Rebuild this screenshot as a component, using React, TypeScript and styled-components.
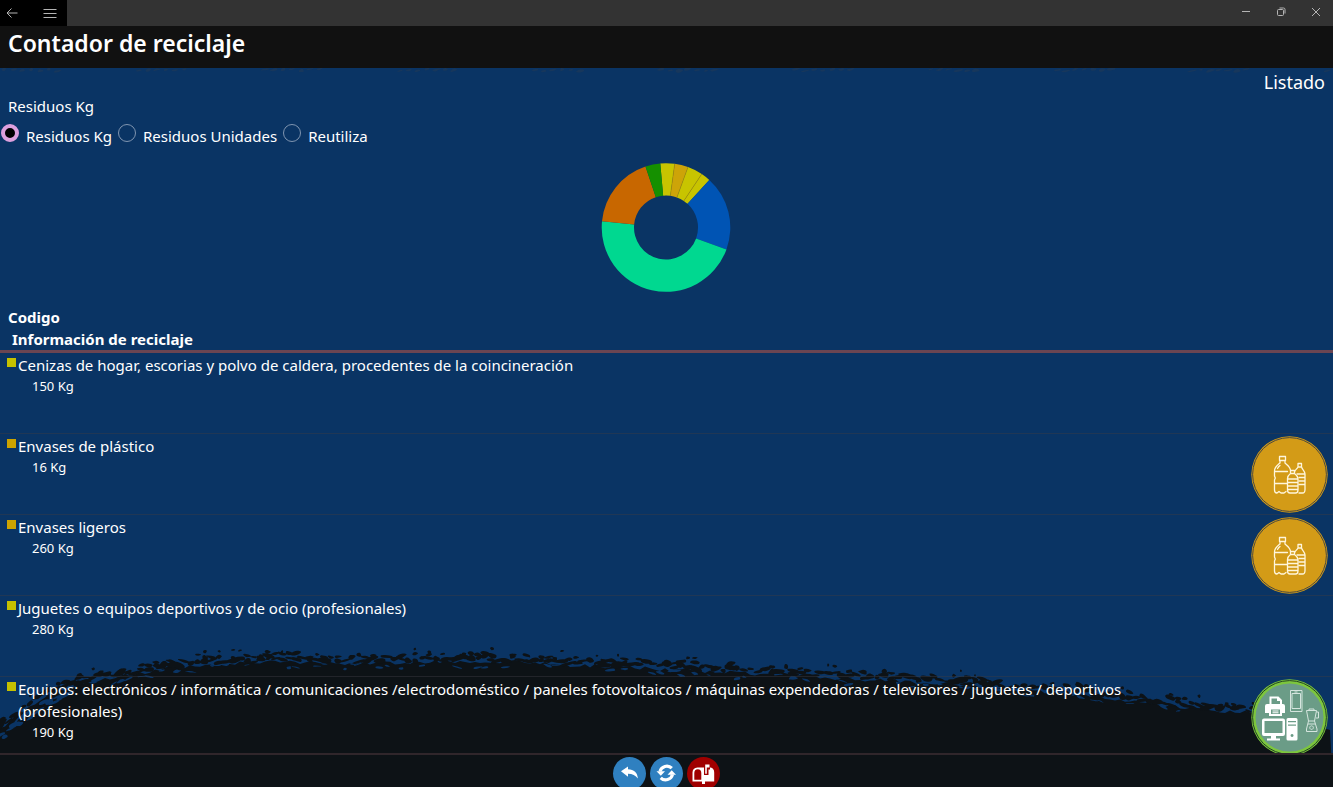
import React from 'react';
import styled, { createGlobalStyle } from 'styled-components';

const GlobalStyle = createGlobalStyle`
  * { box-sizing: border-box; }
  html, body, #root { height: 100%; }
  body {
    margin: 0;
    background: #0d1216;
    color: #ffffff;
    font-family: "Noto Sans", "Open Sans", sans-serif;
    font-size: 15px;
    line-height: 22px;
    overflow: hidden;
  }
`;

const Page = styled.div`
  height: 100%;
  display: flex;
  flex-direction: column;
`;

const TitleBar = styled.div`
  flex: none;
  height: 26px;
  display: flex;
  justify-content: space-between;
  background: #333333;
`;

const NavButtons = styled.nav`
  display: flex;
  gap: 18px;
  padding: 0 7px 0 2px;
  background: #000000;
`;

const WindowButtons = styled.div`
  display: flex;
  gap: 17px;
  padding-right: 8px;
`;

const BarButton = styled.button`
  display: grid;
  place-items: center;
  width: 18px;
  height: 24px;
  padding: 0;
  border: 0;
  background: none;
  color: #b4b4b4;
`;

const NavButton = styled(BarButton)`
  width: 20px;
  height: 26px;
`;

const Header = styled.header`
  flex: none;
  height: 42px;
  padding: 1px 8px;
  background: #111111;
`;

const Heading = styled.h1`
  margin: 0;
  font-size: 23px;
  line-height: 32px;
  font-weight: 600;
`;

const Content = styled.main`
  position: relative;
  flex: 1;
  min-height: 0;
  display: flex;
  flex-direction: column;
  background: #0a3464;
`;

const Backdrop = styled.svg`
  position: absolute;
  left: 0;
  bottom: 0;
  width: 100%;
  height: 113px;
`;

const TopGrain = styled.svg`
  position: absolute;
  left: 0;
  top: 0;
  width: 100%;
  height: 6px;
`;

const Body = styled.div`
  position: relative;
  flex: 1;
  min-height: 0;
  overflow: hidden;
`;

const ListLink = styled.a`
  display: block;
  padding: 0 8px;
  color: #ffffff;
  font-size: 18px;
  line-height: 28px;
  text-align: right;
  text-decoration: none;
`;

const Filter = styled.fieldset`
  margin: 0;
  padding: 0;
  border: 0;
`;

const Legend = styled.legend`
  padding: 0 8px;
  line-height: 20px;
`;

const Options = styled.div`
  display: flex;
  gap: 6px;
  padding: 8px 1px 0;
`;

const Option = styled.label`
  display: flex;
  gap: 7px;
  line-height: 24px;
`;

const Radio = styled.input`
  appearance: none;
  width: 18px;
  height: 18px;
  margin: 0;
  border: 1px solid #8095b0;
  border-radius: 50%;
  &:checked {
    border: 4px solid #dda0dd;
    background: #000000;
  }
`;

const ChartArea = styled.div`
  display: flex;
  justify-content: center;
  padding: 14px 0 13px;
`;

const ListHeader = styled.div`
  padding: 0 8px;
  border-bottom: 3px solid #6b4552;
  font-weight: 700;
`;

const ListHeaderLine = styled.div<{ $indent?: boolean }>`
  padding-left: ${(p) => (p.$indent ? '4px' : '0')};
`;

const List = styled.ul`
  margin: 0;
  padding: 0;
  list-style: none;
`;

const Row = styled.li`
  display: flex;
  min-height: 81px;
  padding: 1px 5px 1px 7px;
  border-bottom: 1px solid rgba(60, 60, 66, 0.45);
`;

const Swatch = styled.span<{ $color: string }>`
  flex: none;
  width: 9px;
  height: 9px;
  margin: 4px 2px 0 0;
  background: ${(p) => p.$color};
`;

const RowText = styled.div`
  flex: 1;
  padding-right: 32px;
`;

const Amount = styled.div`
  padding-left: 14px;
  font-size: 13px;
  line-height: 20px;
`;

const Badge = styled.svg`
  flex: none;
  width: 77px;
  height: 77px;
  margin-top: 1px;
`;

const Footer = styled.footer`
  position: relative;
  flex: none;
  height: 34px;
  display: flex;
  justify-content: center;
  gap: 4px;
  padding-top: 2px;
  border-top: 2px solid #30262b;
  background: #0d1216;
  overflow: hidden;
`;

const RoundButton = styled.button<{ $color: string }>`
  flex: none;
  width: 33px;
  height: 33px;
  padding: 0;
  border: 0;
  border-radius: 50%;
  background: ${(p) => p.$color};
  color: #ffffff;
  svg { display: block; }
`;

const slices = [
  { from: -5.1, to: 7.8, color: '#c8c400' },
  { from: 7.8, to: 20, color: '#cda408' },
  { from: 20, to: 33.8, color: '#c8c400' },
  { from: 33.8, to: 42.3, color: '#c8c400' },
  { from: 42.3, to: 109.9, color: '#0054b4' },
  { from: 109.9, to: 275.6, color: '#00d890' },
  { from: 275.6, to: 341.4, color: '#c86700' },
  { from: 341.4, to: 354.9, color: '#159000' },
];

function polar(r: number, deg: number) {
  const a = (deg * Math.PI) / 180;
  return `${(65 + r * Math.sin(a)).toFixed(2)} ${(65.5 - r * Math.cos(a)).toFixed(2)}`;
}

function Donut() {
  return (
    <svg width="131" height="131" viewBox="0 0 131 131" role="img" aria-label="Residuos Kg">
      {slices.map(({ from, to, color }) => (
        <path
          key={from}
          fill={color}
          d={`M${polar(64.3, from)}A64.3 64.3 0 0 1 ${polar(64.3, to)}L${polar(32, to)}A32 32 0 0 0 ${polar(32, from)}Z`}
        />
      ))}
      {[7.8, 20, 33.8].map((a) => (
        <path key={a} d={`M${polar(32, a)}L${polar(64, a)}`} stroke="#a38a08" strokeWidth="0.6" />
      ))}
    </svg>
  );
}

const ridge = [
  [0, 730], [12, 720], [28, 708], [50, 694], [90, 682], [130, 675], [170, 668], [220, 664], [280, 662],
  [350, 663], [450, 662], [520, 662], [570, 665], [620, 667], [700, 671], [760, 674], [820, 678], [880, 680],
  [940, 683], [1020, 690], [1080, 694], [1130, 701], [1170, 706], [1220, 711], [1262, 713], [1310, 721], [1333, 730],
];

function ridgeY(x: number) {
  const i = Math.max(1, ridge.findIndex((p) => p[0] >= x));
  const [x0, y0] = ridge[i - 1];
  const [x1, y1] = ridge[i];
  return y0 + ((y1 - y0) * (x - x0)) / (x1 - x0) - 640;
}

function randomFrom(seed: number) {
  let s = seed;
  return () => {
    s = (s * 16807) % 2147483647;
    return s / 2147483647;
  };
}

function blob(rnd: () => number, cx: number, cy: number, w: number, h: number, angle: number) {
  const n = 8;
  const pts = Array.from({ length: n }, (_, i) => {
    const a = (i / n) * Math.PI * 2;
    const k = 0.65 + rnd() * 0.7;
    const px = Math.cos(a) * w * k;
    const py = Math.sin(a) * h * k;
    return [cx + px * Math.cos(angle) - py * Math.sin(angle), cy + px * Math.sin(angle) + py * Math.cos(angle)];
  });
  const mid = (i: number) => {
    const p = pts[i % n];
    const q = pts[(i + 1) % n];
    return `${((p[0] + q[0]) / 2).toFixed(1)} ${((p[1] + q[1]) / 2).toFixed(1)}`;
  };
  let d = `M${mid(n - 1)}`;
  pts.forEach((p, i) => {
    d += `Q${p[0].toFixed(1)} ${p[1].toFixed(1)} ${mid(i)}`;
  });
  return `${d}Z`;
}

function brushStroke() {
  const rnd = randomFrom(4217);
  let edge = 'M0 147';
  for (let x = 0; x <= 1333; x += 5) {
    edge += `L${x} ${(ridgeY(x) + (rnd() - 0.5) * 4).toFixed(1)}`;
  }
  edge += 'L1333 147Z';
  let dark = '';
  let blue = '';
  for (let x = 2; x < 1325; x += 7) {
    const slope = Math.atan((ridgeY(x + 8) - ridgeY(x)) / 8);
    const tilt = () => slope + (rnd() - 0.5) * 0.7;
    dark += blob(rnd, x, ridgeY(x) - 1 - rnd() * 5, 3 + rnd() * 5, 1.2 + rnd() * 2, tilt());
    if (rnd() > 0.45) dark += blob(rnd, x, ridgeY(x) - 5 - rnd() * 4, 2 + rnd() * 4, 1.2 + rnd() * 1.4, tilt());
    if (rnd() > 0.85) dark += blob(rnd, x, ridgeY(x) - 10 - rnd() * 4, 1 + rnd() * 2, 0.8 + rnd(), tilt());
    if (rnd() > 0.6) blue += blob(rnd, x, ridgeY(x) + 1 + rnd() * 5, 2 + rnd() * 4, 0.5 + rnd() * 1.2, tilt());
  }
  for (let x = 0; x < 75; x += 5) {
    blue += blob(rnd, x, ridgeY(x) + 4 + rnd() * 8, 3 + rnd() * 4, 1 + rnd() * 1.8, -0.5);
  }
  return { edge, dark, blue };
}

const stroke = brushStroke();

function topGrain() {
  const rnd = randomFrom(913);
  let d = '';
  for (let x = 4; x < 1333; x += 9) {
    if (x % 132 < 60) d += blob(rnd, x, 1 + rnd() * 2, 2 + rnd() * 3, 0.8 + rnd(), -0.2);
  }
  return d;
}

const grain = topGrain();

function BottlesBadge() {
  return (
    <Badge viewBox="0 0 77 77" role="img" aria-label="Envases">
      <circle cx="38.5" cy="38.5" r="38.2" fill="#d39b17" />
      <circle cx="38.5" cy="38.5" r="36.9" fill="none" stroke="#3d4142" strokeWidth="0.9" />
      <g fill="none" stroke="#fff6dc" strokeWidth="1.3" strokeLinecap="round" strokeLinejoin="round">
        <path d="M28.5 20.5h6v4h-6zM29 24.5v2.5c-3 2.5-5.5 4-5.5 8v5l.8 2-.8 2v10c0 2 1 3 2.5 3l2-1.5 2 1.5h3l2-1.5M34 24.5v2.500c3 2.500 5.500 4 5.500 7.500M23.500 35.500h13M23.500 47.500h13M26.500 32.500q1-2 2.500-3" />
        <path d="M39.5 34.5h4v3h-4zM39.5 37.5c-2 1.5-3 2.5-3 5v11.5q0 3 2.5 3h5.500q2.500 0 2.500-3v-11.500c0-2.500-1.500-3.500-3.500-5M36.500 43h10M37 46.500h9.500M37 50h9.500M37 53.500h9.500" />
        <path d="M47 27.5h3.500v3.500h-3.500zM47 31c-1 2-3 3-3 4M50.500 31c1 3 3.500 4 3.500 7v15.500q0 3.500-2.500 3.500h-3.500M46 38h7.500M48 41.500h5.500M48 45h5.500M48 48.500h5.500" />
      </g>
    </Badge>
  );
}

function DevicesBadge() {
  return (
    <Badge viewBox="0 0 77 77" role="img" aria-label="Equipos">
      <circle cx="38.5" cy="38.5" r="38.2" fill="#7cc63d" />
      <circle cx="38.5" cy="38.5" r="36.9" fill="none" stroke="#173420" strokeWidth="0.9" />
      <circle cx="38.5" cy="38.5" r="34" fill="#6b9c87" />
      <g fill="#ffffff">
        <path fillRule="evenodd" d="M18.500 17.500h9l3.500 3.500v4h1q2 0 2 2v7h-4v-4.500h-12v4.500h-4v-7q0-2 2-2h2.500zM20.500 19.500v5.500h8.500v-3h-3v-2.500z" />
        <path fillRule="evenodd" d="M18 28.500h13v8.500h-13zM20 30.500v4.500h9v-4.500zM21.500 31.500h6v1h-6zM21.500 33.200h6v1h-6z" />
        <path fillRule="evenodd" d="M13 39.500h19q2 0 2 2v13.500q0 2-2 2h-7v2.500h4v2h-13v-2h4v-2.500h-7q-2 0-2-2v-13.500q0-2 2-2zM13.500 42v12h18v-12z" />
        <path fillRule="evenodd" d="M37 39h8q1.500 0 1.500 1.500v19.500q0 1.500-1.500 1.500h-8q-1.500 0-1.500-1.500v-19.500q0-1.500 1.500-1.500zM37 42v1.200h8v-1.200zM37 45.500v1.200h8v-1.200zM41 55a1.500 1.500 0 1 0 .1 0z" />
      </g>
      <g fill="none" stroke="#d5e5de" strokeWidth="1">
        <path d="M39.500 11.500h11.500v21h-11.500zM41 14.500h8.500v15h-8.500zM43.500 13h3" />
        <path d="M55.500 31.500h10l-2 10.500h-6zM58 31.500v-1.500h5v1.500M65.500 33h2v6h-2.500M57.500 42l-2 8v2.500h10.500v-2.500l-2.500-8M57 45h7M60.500 46.800a1.800 1.800 0 1 0 .1 0" />
      </g>
    </Badge>
  );
}

type Item = { title: string; amount: string; color: string; icon?: React.ReactNode };

const items: Item[] = [
  {
    title: 'Cenizas de hogar, escorias y polvo de caldera, procedentes de la coincineración',
    amount: '150 Kg',
    color: '#c5c100',
  },
  { title: 'Envases de plástico', amount: '16 Kg', color: '#cca300', icon: <BottlesBadge /> },
  { title: 'Envases ligeros', amount: '260 Kg', color: '#cca300', icon: <BottlesBadge /> },
  { title: 'Juguetes o equipos deportivos y de ocio (profesionales)', amount: '280 Kg', color: '#c5c100' },
  {
    title:
      'Equipos: electrónicos / informática / comunicaciones /electrodoméstico / paneles fotovoltaicos / máquinas expendedoras / televisores / juguetes / deportivos (profesionales)',
    amount: '190 Kg',
    color: '#c5c100',
    icon: <DevicesBadge />,
  },
];

const options = ['Residuos Kg', 'Residuos Unidades', 'Reutiliza'];

export default function App() {
  return (
    <Page>
      <GlobalStyle />
      <TitleBar>
        <NavButtons>
          <NavButton aria-label="Atrás">
            <svg width="12" height="12" viewBox="0 0 12 12" fill="none" stroke="currentColor">
              <path d="M11.500 6H1M5.500 1.500L1 6l4.500 4.500" />
            </svg>
          </NavButton>
          <NavButton aria-label="Menú">
            <svg width="14" height="12" viewBox="0 0 14 12" stroke="currentColor">
              <path d="M0.500 2.500h13M0.500 6.500h13M0.500 10.500h13" />
            </svg>
          </NavButton>
        </NavButtons>
        <WindowButtons>
          <BarButton aria-label="Minimizar">
            <svg width="10" height="10" viewBox="0 0 10 10" stroke="currentColor">
              <path d="M1 4.500h8" />
            </svg>
          </BarButton>
          <BarButton aria-label="Restaurar">
            <svg width="10" height="10" viewBox="0 0 10 10" fill="none" stroke="currentColor">
              <rect x="1.500" y="2.500" width="6" height="6" rx="1" />
              <path d="M3.500 1h4q1.500 0 1.500 1.500v4" />
            </svg>
          </BarButton>
          <BarButton aria-label="Cerrar">
            <svg width="10" height="10" viewBox="0 0 10 10" stroke="currentColor">
              <path d="M1 1l8 8M9 1L1 9" />
            </svg>
          </BarButton>
        </WindowButtons>
      </TitleBar>
      <Header>
        <Heading>Contador de reciclaje</Heading>
      </Header>
      <Content>
        <TopGrain viewBox="0 0 1333 6" preserveAspectRatio="none" aria-hidden="true">
          <path d={grain} fill="#17375c" />
        </TopGrain>
        <Backdrop viewBox="0 0 1333 113" preserveAspectRatio="none" aria-hidden="true">
          <path d={stroke.edge} fill="#0d1216" />
          <path d={stroke.dark} fill="#0d1216" />
          <path d={stroke.blue} fill="#0a3464" />
        </Backdrop>
        <Body>
          <ListLink href="#listado">Listado</ListLink>
          <Filter>
            <Legend>Residuos Kg</Legend>
            <Options>
              {options.map((name, i) => (
                <Option key={name}>
                  <Radio type="radio" name="tipo" defaultChecked={i === 0} />
                  {name}
                </Option>
              ))}
            </Options>
          </Filter>
          <ChartArea>
            <Donut />
          </ChartArea>
          <ListHeader>
            <ListHeaderLine>Codigo</ListHeaderLine>
            <ListHeaderLine $indent>Información de reciclaje</ListHeaderLine>
          </ListHeader>
          <List>
            {items.map((item) => (
              <Row key={item.title}>
                <Swatch $color={item.color} />
                <RowText>
                  <div>{item.title}</div>
                  <Amount>{item.amount}</Amount>
                </RowText>
                {item.icon}
              </Row>
            ))}
          </List>
        </Body>
      </Content>
      <Footer>
        <RoundButton $color="#2f80c0" aria-label="Volver">
          <svg width="33" height="33" viewBox="0 0 33 33" fill="currentColor">
            <path d="M8 14.2L15 9.500v2.800c6 .2 9.500 3.200 9.900 9.300-2.400-3.300-5.400-4.800-9.900-4.800v2.900z" />
          </svg>
        </RoundButton>
        <RoundButton $color="#2f80c0" aria-label="Actualizar">
          <svg width="33" height="33" viewBox="0 0 33 33">
            <path
              d="M10 14.500A7 6.800 0 0 1 21.800 11.200M22.500 17.500A7 6.800 0 0 1 10.700 20.800"
              fill="none"
              stroke="currentColor"
              strokeWidth="3.2"
            />
            <path d="M6.500 14.200h8.500l-4.200 4.600zM26 17.800h-8.500l4.200-4.600z" fill="currentColor" />
          </svg>
        </RoundButton>
        <RoundButton $color="#a00000" aria-label="Buzón">
          <svg width="33" height="33" viewBox="0 0 33 33" fill="currentColor">
            <path fillRule="evenodd" d="M10.500 10.500h6.500v7.500h4.500v-5.500h1.500v-2h.5q3.700.8 3.700 5v9h-9.200v2.500h-3v-2.500h-9.500v-9q0-4.500 5-5zM10.800 12.300q-3.500.2-3.500 3.700v6.700h7v-6.700q0-3.500-3.500-3.700z" />
            <path d="M18.200 7.500h4.300v3h-2.700v6.300h-1.600z" />
          </svg>
        </RoundButton>
      </Footer>
    </Page>
  );
}
